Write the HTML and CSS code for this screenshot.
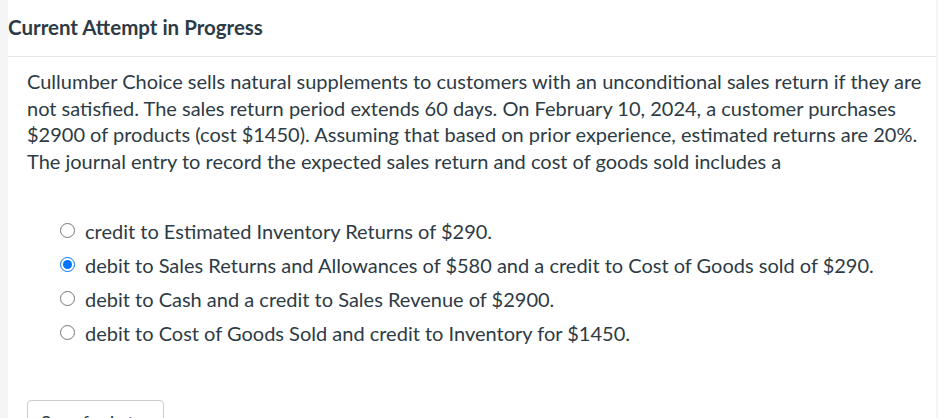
FILE: index.html
```html
<!DOCTYPE html>
<html>
<head>
<meta charset="utf-8">
<link rel="stylesheet" href="styles.css">
</head>
<body>
<div class="page">
  <div class="gutter"></div>
  <main class="main">
    <h2 class="header">Current Attempt in Progress</h2>
    <section class="question">
      <p class="prompt">Cullumber Choice sells natural supplements to customers with an unconditional sales return if they are not satisfied. The sales return period extends 60 days. On February 10, 2024, a customer purchases $2900 of products (cost $1450). Assuming that based on prior experience, estimated returns are 20%. The journal entry to record the expected sales return and cost of goods sold includes a</p>
      <ul class="options">
        <li class="option"><label><input type="radio" name="ans"><span>credit to Estimated Inventory Returns of $290.</span></label></li>
        <li class="option"><label><input type="radio" name="ans" checked><span>debit to Sales Returns and Allowances of $580 and a credit to Cost of Goods sold of $290.</span></label></li>
        <li class="option"><label><input type="radio" name="ans"><span>debit to Cash and a credit to Sales Revenue of $2900.</span></label></li>
        <li class="option"><label><input type="radio" name="ans"><span>debit to Cost of Goods Sold and credit to Inventory for $1450.</span></label></li>
      </ul>
      <div class="actions"><button class="save">Save for Later</button></div>
    </section>
  </main>
  <div class="gutter-right"></div>
</div>
</body>
</html>
```

FILE: styles.css
```css
html, body {
  margin: 0;
  padding: 0;
  background: #ffffff;
}
body {
  font-family: Lato, "Open Sans", sans-serif;
  color: #2d3b45;
  height: 418px;
  overflow: hidden;
}
.page {
  display: flex;
  height: 418px;
  overflow: hidden;
}
.gutter {
  width: 8px;
  flex: none;
  background: #f5f5f5;
}
.gutter-right {
  width: 2px;
  flex: none;
  background: #f5f5f5;
}
.main {
  flex: 1;
  min-width: 0;
}
.header {
  margin: 0;
  font-size: 20.5px;
  font-weight: 700;
  line-height: 24px;
  padding: 15.3px 0 16.7px 0;
  border-bottom: 1px solid #e8e8e8;
}
.question {
  padding: 11px 0 0 19px;
}
.prompt {
  margin: 0;
  font-size: 20px;
  line-height: 26.67px;
}
.options {
  list-style: none;
  margin: 39.6px 0 0 0;
  padding: 0 0 0 33px;
}
.option {
  height: 34px;
}
.option label {
  display: flex;
  align-items: center;
  height: 34px;
  font-size: 20px;
  line-height: 24px;
}
.option input {
  margin: 0 10px 0 0;
  width: 15px;
  height: 15px;
  flex: none;
  position: relative;
  top: -1px;
}
.actions {
  margin-top: 49.7px;
}
.save {
  width: 137px;
  height: 44px;
  border: 1px solid #c7cdd1;
  border-radius: 4px;
  background: #ffffff;
  color: #2d3b45;
  font-family: Lato, sans-serif;
  font-size: 18px;
  padding: 0;
}
```
